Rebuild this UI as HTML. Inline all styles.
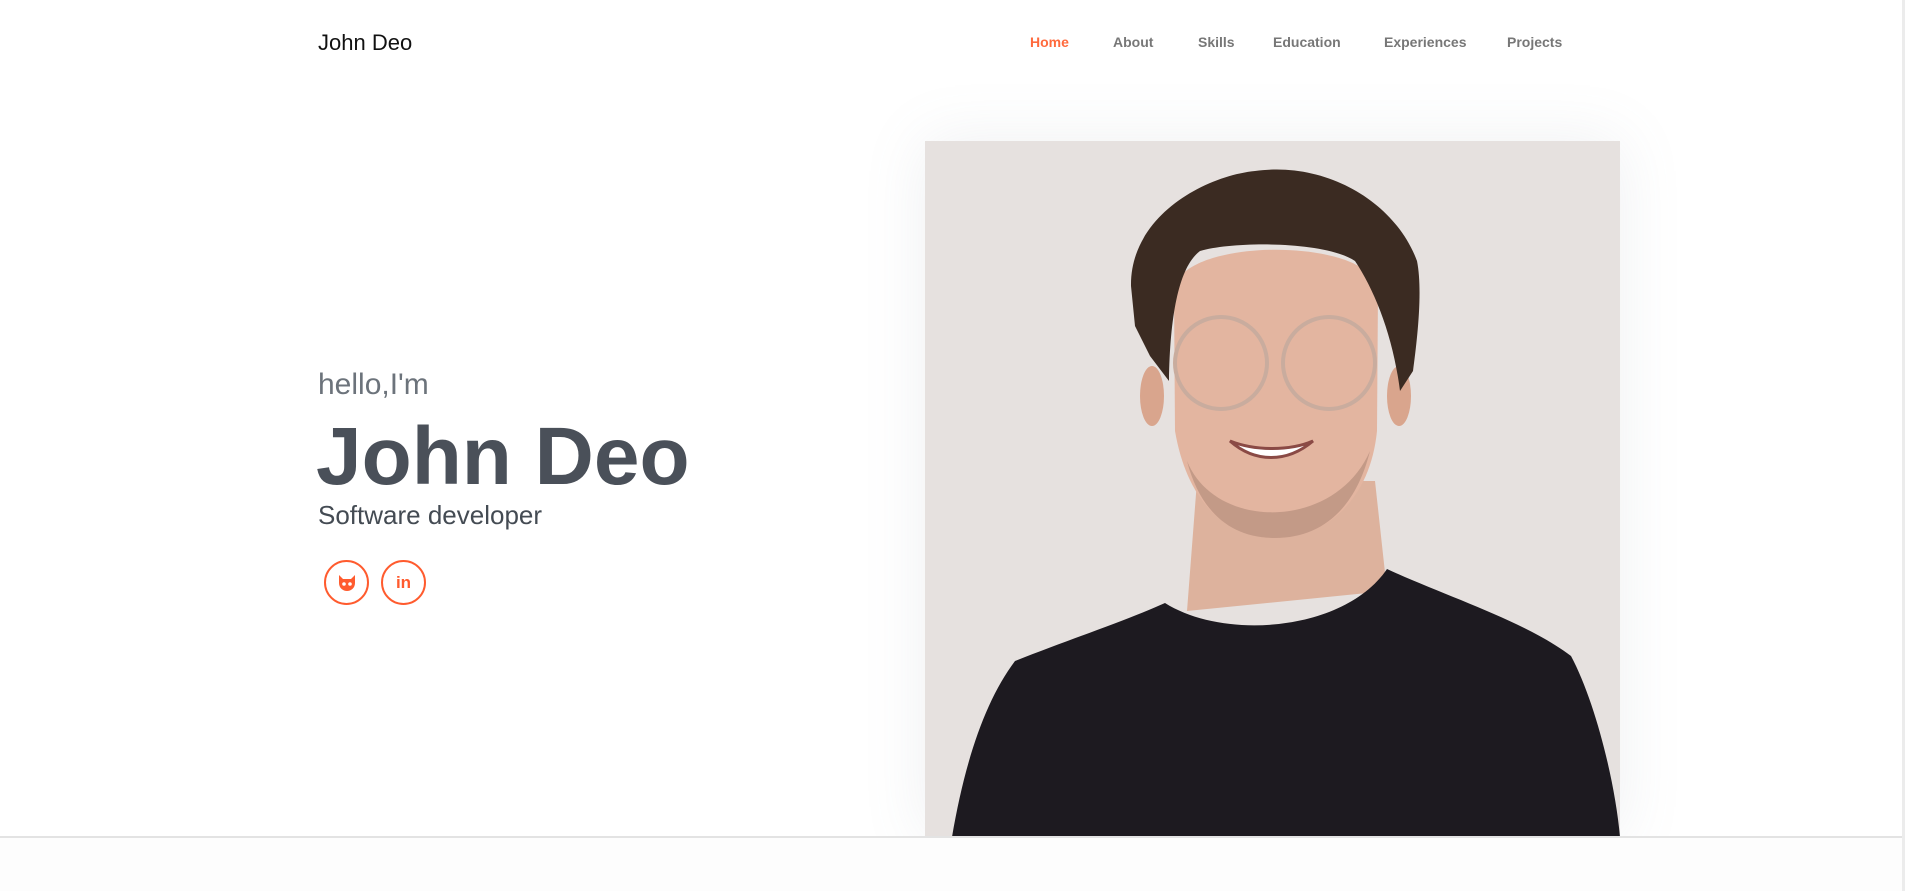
<!DOCTYPE html>
<html><head><meta charset="utf-8"><style>
html,body{margin:0;padding:0;}
body{width:1905px;height:891px;overflow:hidden;background:#fff;font-family:"Liberation Sans",sans-serif;position:relative;}
.logo{position:absolute;left:318px;top:30px;font-size:22px;color:#111;}
.nav a{position:absolute;top:34px;font-size:14px;color:#777;text-decoration:none;font-weight:bold;}
.hello{position:absolute;left:318px;top:368px;font-size:30px;color:#6c737b;}
.name{position:absolute;left:316px;top:410px;font-size:82px;font-weight:bold;color:#4a5059;}
.role{position:absolute;left:318px;top:500px;font-size:26px;color:#444b53;}
.ic{position:absolute;top:560px;width:45px;height:45px;border:2px solid #ff5b2e;border-radius:50%;box-sizing:border-box;display:flex;align-items:center;justify-content:center;color:#ff5b2e;font-weight:bold;font-size:17px;}
.photo{position:absolute;left:925px;top:141px;width:695px;height:696px;box-shadow:0 0 60px rgba(120,130,150,0.12);}
.line{position:absolute;left:0;top:836px;width:1903px;height:2px;background:#e3e3e3;}
.bottom{position:absolute;left:0;top:838px;width:1903px;height:53px;background:#fdfdfd;}
.sb{position:absolute;left:1902px;top:0;width:3px;height:891px;background:#ececec;}
</style></head><body>
<div class="logo">John Deo</div>
<div class="nav">
<a style="left:1030px;color:#ff6a3d">Home</a>
<a style="left:1113px">About</a>
<a style="left:1198px">Skills</a>
<a style="left:1273px">Education</a>
<a style="left:1384px">Experiences</a>
<a style="left:1507px">Projects</a>
</div>
<div class="hello">hello,I'm</div>
<div class="name">John Deo</div>
<div class="role">Software developer</div>
<div class="ic" style="left:324px"><svg width="20" height="18" viewBox="0 0 20 18"><path d="M2 1 L6 5 H14 L18 1 V9 C18 14 14 17 10 17 C6 17 2 14 2 9 Z" fill="#ff5b2e"/><circle cx="7" cy="10" r="1.8" fill="#fff"/><circle cx="13" cy="10" r="1.8" fill="#fff"/></svg></div>
<div class="ic" style="left:381px">in</div>
<div class="photo"><svg width="695" height="696" viewBox="0 0 695 696">
<rect width="695" height="696" fill="#e6e1df"/>
<path d="M272 340 L450 340 L462 450 L262 470 Z" fill="#ddb29d"/>
<path d="M240 462 C300 500 420 490 462 428 C520 455 600 480 646 515 C670 560 690 640 695 696 L27 696 C40 620 60 560 90 520 C140 500 200 480 240 462 Z" fill="#1d1a20"/>
<ellipse cx="227" cy="255" rx="12" ry="30" fill="#d9a58d"/>
<ellipse cx="474" cy="255" rx="12" ry="30" fill="#d9a58d"/>
<path d="M249 150 C252 95 450 95 453 150 L452 290 C445 360 400 397 350 397 C300 397 262 360 250 290 Z" fill="#e3b5a0"/>
<path d="M262 320 C290 390 410 390 445 310 C430 370 395 397 350 397 C305 397 275 370 262 320 Z" fill="#a98472" opacity="0.55"/>
<path d="M206 145 C205 75 280 35 330 30 C400 20 470 60 492 120 C498 150 492 200 488 230 L475 250 C468 195 450 150 430 120 C400 100 310 100 275 110 C255 125 245 170 244 240 L225 215 L210 185 Z" fill="#3b2b22"/>
<circle cx="296" cy="222" r="46" fill="none" stroke="#c9ac9e" stroke-width="4"/>
<circle cx="404" cy="222" r="46" fill="none" stroke="#c9ac9e" stroke-width="4"/>
<path d="M305 300 C330 322 362 322 388 300 C365 310 330 310 305 300 Z" fill="#fff" stroke="#8a4a45" stroke-width="3"/>
</svg></div>
<div class="line"></div>
<div class="bottom"></div>
<div class="sb"></div>
</body></html>
